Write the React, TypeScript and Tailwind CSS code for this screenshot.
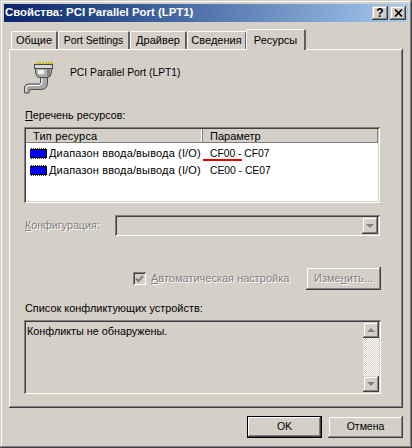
const FONT = "[font-family:'Liberation_Sans',Arial,sans-serif]";
const BEVEL_OUT = "shadow-[inset_-1px_-1px_0_#404040,inset_1px_1px_0_#ffffff,inset_-2px_-2px_0_#808080]";
const BEVEL_SUNK = "shadow-[inset_1px_1px_0_#808080,inset_-1px_-1px_0_#ffffff,inset_2px_2px_0_#404040,inset_-2px_-2px_0_#d4d0c8]";
const BEVEL_BTN = "shadow-[inset_-1px_-1px_0_#404040,inset_1px_1px_0_#d4d0c8,inset_-2px_-2px_0_#808080,inset_2px_2px_0_#ffffff]";
const DIS = "text-[#808080] [text-shadow:1px_1px_0_#ffffff]";

function Tab({ label, w, size }: { label: string; w: string; size: string }) {
  return (
    <div className={`${w} ${size} h-[18px] mt-[2px] border-t border-l border-white rounded-t-[2px] border-r-2 border-r-[#606060] flex items-center justify-center text-black`}>
      {label}
    </div>
  );
}

function Chip() {
  return (
    <svg width="17" height="11" viewBox="0 0 17 11" className="shrink-0">
      {[1, 3, 5, 7, 9, 11, 13, 15].map((x) => (
        <g key={x}>
          <rect x={x} y="0" width="1" height="2" fill="#404040" />
          <rect x={x} y="10" width="1" height="1" fill="#404040" />
        </g>
      ))}
      <rect x="0" y="1" width="17" height="9" fill="#000" />
      <rect x="0" y="2" width="16" height="7" fill="#0000f8" />
    </svg>
  );
}

function Plug() {
  return (
    <svg width="32" height="33" viewBox="0 0 32 33" className="shrink-0">
      <path d="M0.500 32 V27 Q0.500 23 5 23 H15 Q16.500 23 16.500 21 V16 H23.500 V22 Q23.500 28.500 17 28.500 H7 Q5 28.500 5 30 V32 Z" fill="#a8a8a8" stroke="#505050" />
      <path d="M2 31 V27 Q2 24.500 5 24.500 H15 Q18 24.500 18 21 V17" stroke="#ffffff" fill="none" />
      <path d="M11 7 H28 L27 13 Q26.500 16.500 23 16.500 H16 Q12.500 16.500 12 13 Z" fill="#b0b0b0" stroke="#484848" />
      <rect x="14" y="9" width="6" height="4" fill="#f0f0f0" />
      <rect x="23" y="8" width="3" height="7" fill="#808080" />
      <rect x="10.500" y="3.500" width="18" height="4" fill="#d8d8d8" stroke="#484848" />
      {[12, 15, 18, 21, 24, 27].map((x) => (
        <rect key={x} x={x} y="1" width="2" height="2" fill="#c8c000" />
      ))}
    </svg>
  );
}

function Arrow({ dir }: { dir: "up" | "down" }) {
  return (
    <div className={`w-0 h-0 border-x-[4px] border-x-transparent ${dir === "up" ? "border-b-[4px] border-b-[#808080]" : "border-t-[4px] border-t-[#808080]"}`} />
  );
}

function Row({ value }: { value: string }) {
  return (
    <div className="h-[17px] flex items-center text-black">
      <div className="w-[177px] pl-[4px] flex items-center gap-[2px]">
        <Chip />
        <span className="whitespace-nowrap text-[11px] tracking-[0.15px]">Диапазон ввода/вывода (I/O)</span>
      </div>
      <span className="pl-[7px] whitespace-nowrap text-[10.3px]">{value}</span>
    </div>
  );
}

export default function App() {
  return (
    <div className={`${FONT} ${BEVEL_BTN} w-[412px] h-[448px] bg-[#d4d0c8] pt-[4px] px-[4px] flex flex-col overflow-hidden text-[11px] text-black`}>
      <div className="h-[18px] shrink-0 bg-gradient-to-r from-[#0a246a] to-[#a6caf0] flex items-center justify-between pl-[1px] pr-[2px]">
        <span className="font-bold text-white text-[11.4px] whitespace-nowrap">Свойства: PCI Parallel Port (LPT1)</span>
        <div className="flex gap-[2px]">
          <div className={`${BEVEL_BTN} bg-[#d4d0c8] w-[16px] h-[14px] flex items-center justify-center text-[12px] font-bold leading-none text-black`}>?</div>
          <div className={`${BEVEL_BTN} bg-[#d4d0c8] w-[16px] h-[14px] flex items-center justify-center`}>
            <svg width="9" height="8" viewBox="0 0 9 8">
              <path d="M1 0.500 L8 7.500 M8 0.500 L1 7.500" stroke="#000" strokeWidth="1.600" />
            </svg>
          </div>
        </div>
      </div>

      <div className="ml-[7px] mt-[7px] h-[20px] shrink-0 flex relative z-10">
        <Tab label="Общие" w="w-[47px]" size="text-[11px]" />
        <Tab label="Port Settings" w="w-[72px]" size="text-[10.4px]" />
        <Tab label="Драйвер" w="w-[57px]" size="text-[11px]" />
        <Tab label="Сведения" w="w-[60px]" size="text-[11px]" />
        <div className="w-[60px] h-[21px] border-t border-l border-white rounded-t-[2px] border-r-2 border-r-[#606060] bg-[#d4d0c8] flex items-start pt-[2px] justify-center text-[11px] -ml-[1px]">
          Ресурсы
        </div>
      </div>

      <div className={`${BEVEL_OUT} ml-[5px] w-[394px] h-[359px] shrink-0 pl-[15px] pr-[22px] flex flex-col`}>
        <div className="mt-[12px] h-[33px] flex items-start gap-[14px]">
          <Plug />
          <span className="whitespace-nowrap text-[10.3px] leading-[14px] mt-[5px]">PCI Parallel Port (LPT1)</span>
        </div>

        <div className="mt-[14px] h-[14px] pl-[1px] leading-[14px] text-[10.8px]"><span className="underline">П</span>еречень ресурсов:</div>

        <div className={`${BEVEL_SUNK} mt-[5px] w-[356px] h-[76px] bg-white p-[2px] relative`}>
          <div className="flex h-[14px] leading-[15px] bg-[#d4d0c8] border-b border-[#808080] text-[11px]">
            <div className="w-[177px] pl-[7px] border-r border-[#808080] shadow-[inset_-1px_0_0_#ffffff] tracking-[0.2px]">Тип ресурса</div>
            <div className="flex-1 pl-[7px] border-r border-[#808080]">Параметр</div>
          </div>
          <div className="mt-[2px]">
            <Row value="CF00 - CF07" />
            <Row value="CE00 - CE07" />
          </div>
          <div className="absolute left-[179px] top-[32px] w-[39px] h-[2px] bg-[#e00000]" />
        </div>

        <div className="mt-[12px] h-[21px] flex items-center">
          <div className={`${DIS} w-[91px] shrink-0 pl-[1px] text-[10.7px]`}><span className="underline">К</span>онфигурация:</div>
          <div className={`${BEVEL_SUNK} w-[265px] h-[21px] p-[2px] flex justify-end`}>
            <div className={`${BEVEL_BTN} w-[16px] h-[17px] flex items-center justify-center`}><Arrow dir="down" /></div>
          </div>
        </div>

        <div className="mt-[31px] h-[23px] flex items-center">
          <div className="ml-[109px] w-[13px] h-[13px] bg-[#d4d0c8] shadow-[inset_1px_1px_0_#808080,inset_-1px_-1px_0_#ffffff,inset_2px_2px_0_#404040] flex items-center justify-center">
            <svg width="9" height="8" viewBox="0 0 9 8">
              <path d="M1 3.500 L3.500 6 L8 1" stroke="#808080" strokeWidth="2" fill="none" />
            </svg>
          </div>
          <div className={`${DIS} ml-[5px] w-[155px] whitespace-nowrap text-[11px]`}><span className="underline">А</span>втоматическая настройка</div>
          <div className={`${BEVEL_BTN} ${DIS} w-[75px] h-[23px] flex items-center justify-center text-[11px]`}>
            <span>Изме<span className="underline">н</span>ить...</span>
          </div>
        </div>

        <div className="mt-[11px] h-[14px] pl-[1px] leading-[14px] text-[10.9px]">Список конфликтующих устройств:</div>

        <div className={`${BEVEL_SUNK} mt-[5px] w-[357px] h-[74px] p-[2px] flex`}>
          <div className="flex-1 pl-[1px] leading-[14px] pt-[2px] text-[10.8px]">Конфликты не обнаружены.</div>
          <div className="w-[16px] flex flex-col bg-[repeating-conic-gradient(#ffffff_0_25%,#d4d0c8_0_50%)] bg-[length:2px_2px]">
            <div className={`${BEVEL_BTN} bg-[#d4d0c8] h-[16px] flex items-center justify-center`}><Arrow dir="up" /></div>
            <div className="flex-1" />
            <div className={`${BEVEL_BTN} bg-[#d4d0c8] h-[16px] flex items-center justify-center`}><Arrow dir="down" /></div>
          </div>
        </div>
      </div>

      <div className="mt-[8px] ml-[243px] flex gap-[6px] text-[10.5px]">
        <div className="w-[75px] h-[22px] border border-black shadow-[inset_-1px_-1px_0_#404040,inset_1px_1px_0_#ffffff,inset_-2px_-2px_0_#808080] flex items-center justify-center">OK</div>
        <div className={`${BEVEL_BTN} w-[75px] h-[22px] flex items-center justify-center`}>Отмена</div>
      </div>
    </div>
  );
}
